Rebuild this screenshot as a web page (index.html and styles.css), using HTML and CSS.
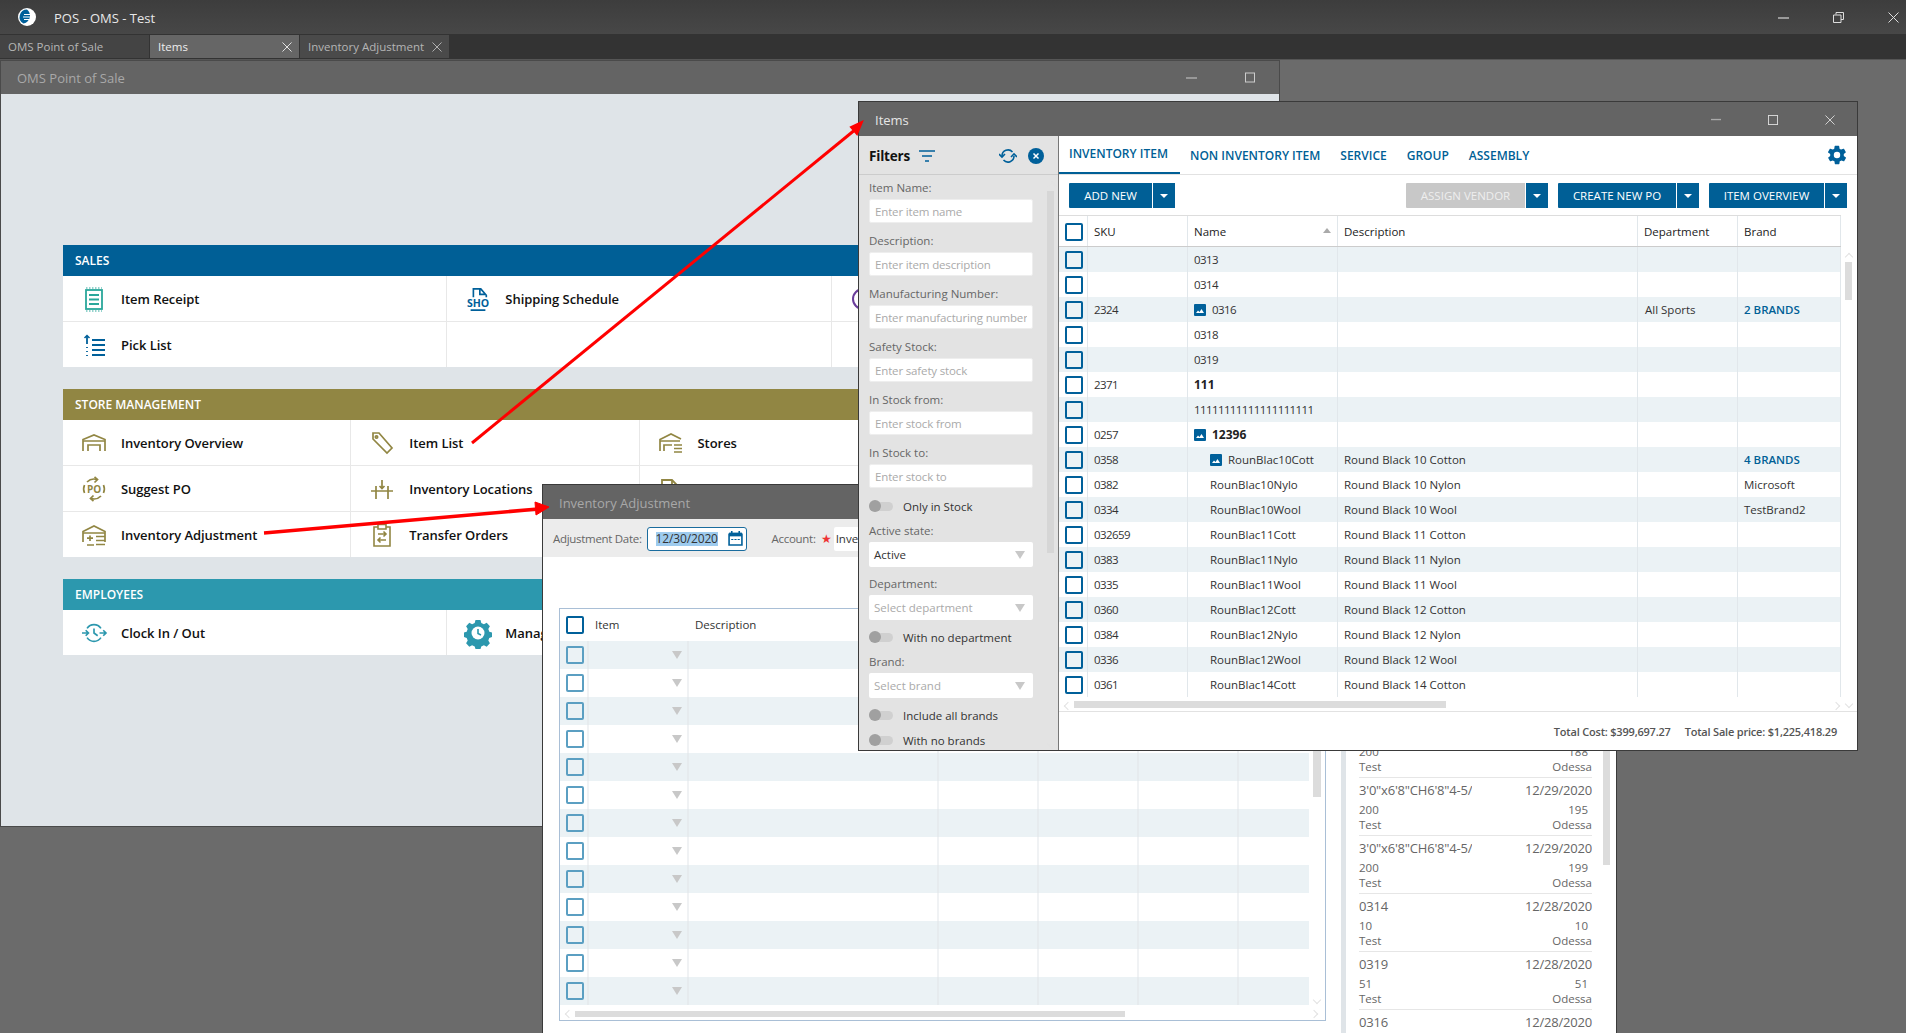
FILE: index.html
```html
<!DOCTYPE html>
<html lang="en">
<head>
<meta charset="utf-8">
<title>POS - OMS - Test</title>
<link rel="stylesheet" href="styles.css">
</head>
<body>
<header class="appbar">
  <svg class="logo" viewBox="0 0 18 18"><circle cx="9" cy="9" r="9" fill="#fff"/><path d="M9 1.500A7.500 7.500 0 0 0 5.500 15.600 9 9 0 0 0 12 9 9 9 0 0 0 9 1.500Z" fill="#00609a"/><path d="M6 6.500h6M5 9h8M6 11.500h5" stroke="#fff" stroke-width="1"/></svg>
  <span class="apptitle">POS - OMS - Test</span>
  <div class="ctrls ctrls-app">
    <svg viewBox="0 0 11 11"><path d="M0 6h11" stroke="#999" stroke-width="2"/></svg>
    <svg viewBox="0 0 11 11"><path d="M3 2.500V.5h7.500v7H8M.5 3h7.500v7.500H.5Z" fill="none" stroke="#ddd"/></svg>
    <svg viewBox="0 0 11 11"><path d="M.5.500l10 10M10.500.500l-10 10" stroke="#ddd" stroke-width="1"/></svg>
  </div>
</header>
<nav class="tabstrip">
  <div class="tab tab-a"><span>OMS Point of Sale</span></div>
  <div class="tab tab-b"><span>Items</span><svg viewBox="0 0 11 11"><path d="M.5.500l10 10M10.500.500l-10 10" stroke="#eee"/></svg></div>
  <div class="tab tab-c"><span>Inventory Adjustment</span><svg viewBox="0 0 11 11"><path d="M.5.500l10 10M10.500.500l-10 10" stroke="#bbb"/></svg></div>
</nav>

<main class="desktop">
  <section class="window win-oms">
    <div class="wintitle">
      <span class="dim">OMS Point of Sale</span>
      <div class="ctrls ctrls-oms">
        <svg viewBox="0 0 11 11"><path d="M0 6h11" stroke="#aaa" stroke-width="1.500"/></svg>
        <svg viewBox="0 0 11 11"><rect x=".5" y="1" width="9" height="9" fill="none" stroke="#ccc"/></svg>
      </div>
    </div>
    <div class="oms-body">
      <div class="group">
        <h2 class="ghead ghead-blue">SALES</h2>
        <div class="gcells cols3">
          <div class="cell">
            <svg class="ic" viewBox="0 0 24 24" fill="none" stroke="#2aa79b" stroke-width="1.800"><rect x="4" y="3" width="16" height="19" fill="#fff"/><path d="M7 8h10M7 12.500h10M7 17h10"/><path d="M4 1h16M4 24h16" stroke-dasharray="1.500 1.500" stroke-width="1"/></svg>
            <span>Item Receipt</span>
          </div>
          <div class="cell">
            <svg class="ic" viewBox="0 0 24 26" fill="none" stroke="#00609a" stroke-width="1.800"><path d="M7 11V2h8l6 7v2M14 3v5h6M4 25h16"/><text x="0" y="22" class="ic-sho" textLength="24" lengthAdjust="spacingAndGlyphs">SHO</text></svg>
            <span>Shipping Schedule</span>
          </div>
          <div class="cell">
            <svg class="ic" viewBox="0 0 24 24" fill="none" stroke="#6a3d9a" stroke-width="2"><circle cx="12" cy="12" r="10"/></svg>
          </div>
          <div class="cell">
            <svg class="ic" viewBox="0 0 24 24" fill="none" stroke="#00609a" stroke-width="1.800"><path d="M10 7h13M10 12h13M10 17h13M10 22h13"/><path d="M5 23v-1M5 19v-1M5 15v-1M5 11V3"/><path d="M2.500 5 5 2.500 7.500 5" stroke-width="1.500"/></svg>
            <span>Pick List</span>
          </div>
          <div class="cell"></div>
          <div class="cell"></div>
        </div>
      </div>

      <div class="group">
        <h2 class="ghead ghead-olive">STORE MANAGEMENT</h2>
        <div class="gcells cols4">
          <div class="cell">
            <svg class="ic" viewBox="0 0 24 24" fill="none" stroke="#918643" stroke-width="1.700"><path d="M1 20V8.500L12 4l11 4.500V20M1 10h22M6 20v-6h12v6"/></svg>
            <span>Inventory Overview</span>
          </div>
          <div class="cell">
            <svg class="ic" viewBox="0 0 24 24" fill="none" stroke="#918643" stroke-width="1.700"><path d="M3 2h6l13 15-5 5L3 8Z"/><circle cx="6.500" cy="6" r="1.200"/></svg>
            <span>Item List</span>
          </div>
          <div class="cell">
            <svg class="ic" viewBox="0 0 24 24" fill="none" stroke="#918643" stroke-width="1.700"><path d="M1 20V8.500L12 3l10 5M1 10h20M5 20v-6h8M15 14h8M15 17.500h8M15 21h8"/></svg>
            <span>Stores</span>
          </div>
          <div class="cell"></div>
          <div class="cell">
            <svg class="ic" viewBox="0 0 24 24" fill="none" stroke="#918643" stroke-width="1.700"><path d="M5 5A10 10 0 0 1 15 2.500M19 19A10 10 0 0 1 9 21.500M2.500 16A10 10 0 0 1 2.500 8M21.500 8A10 10 0 0 1 21.500 16"/><path d="M12.500 0l3 2.500-3 3M11.500 18.500l-3 3 3 2.500"/><text x="12" y="15.500" class="ic-po">PO</text></svg>
            <span>Suggest PO</span>
          </div>
          <div class="cell">
            <svg class="ic" viewBox="0 0 24 24" fill="none" stroke="#918643" stroke-width="1.700"><path d="M1 14h22M6 9v13M18 9v13M12 3v8M9.500 9l2.500 2.500L14.500 9"/></svg>
            <span>Inventory Locations</span>
          </div>
          <div class="cell">
            <svg class="ic" viewBox="0 0 24 24" fill="none" stroke="#918643" stroke-width="1.800"><path d="M3 21V3h10l6 6v12"/><path d="M13 3v6h6"/></svg>
          </div>
          <div class="cell"></div>
          <div class="cell">
            <svg class="ic" viewBox="0 0 24 24" fill="none" stroke="#918643" stroke-width="1.700"><path d="M1 19V8.500L12 3l11 5.500V19M1 10h22M8 12.500v5.500M5 15.200h6M5 22h7M14 13.500h9M14 17.500h9M14 21.500h9"/></svg>
            <span>Inventory Adjustment</span>
          </div>
          <div class="cell">
            <svg class="ic" viewBox="0 0 24 24" fill="none" stroke="#918643" stroke-width="1.600"><path d="M8 4H4v19h16V4h-4M8 1.500h8V6H8ZM8 11h8M13.500 8.500 16 11l-2.500 2.500M16 17H8M10.500 14.500 8 17l2.500 2.500"/></svg>
            <span>Transfer Orders</span>
          </div>
          <div class="cell"></div>
          <div class="cell"></div>
        </div>
      </div>

      <div class="group">
        <h2 class="ghead ghead-teal">EMPLOYEES</h2>
        <div class="gcells cols3">
          <div class="cell">
            <svg class="ic" viewBox="0 0 26 24" fill="none" stroke="#2c98ae" stroke-width="1.800"><path d="M5.500 7A9 9 0 0 1 20.500 7M20.500 17A9 9 0 0 1 5.500 17"/><path d="M13 7v5l4 3M0 12h7M4 9l3 3-3 3M19 12h7M23 9l3 3-3 3"/></svg>
            <span>Clock In / Out</span>
          </div>
          <div class="cell">
            <svg class="ic" viewBox="0 0 24 24"><path fill="#2c98ae" d="M9.500 0h5l.8 3 2.600 1.100 2.800-1.500 3.200 3.500-1.600 2.600 1 2.500 2.700.8v4.400l-2.700.8-1 2.500 1.600 2.600-3.200 3.500-2.800-1.500-2.600 1.100-.8 2.600h-5l-.8-2.600-2.600-1.100-2.800 1.500-3.200-3.500 1.600-2.600-1-2.500-2.700-.8v-4.400l2.700-.8 1-2.500-1.600-2.600 3.200-3.500 2.800 1.500L8.700 3Z" transform="translate(0 -1) scale(1 1.040)"/><circle cx="12" cy="12" r="6.500" fill="#fff"/><path d="M12 8v4.500l3 1.500" fill="none" stroke="#2c98ae" stroke-width="1.600"/></svg>
            <span>Manage Employees</span>
          </div>
          <div class="cell"></div>
        </div>
      </div>
    </div>
  </section>

  <section class="window win-inv">
    <div class="wintitle"><span class="dim">Inventory Adjustment</span></div>
    <div class="inv-toolbar">
      <label class="inv-label">Adjustment Date:</label>
      <div class="datebox">
        <span class="selected">12/30/2020</span>
        <svg class="cal" viewBox="0 0 14 14"><path d="M1 3h12v10H1Z" fill="#fff" stroke="#00609a" stroke-width="1.500"/><path d="M1 1.500h12V5H1Z" fill="#00609a"/><path d="M3.500 0v2M10.500 0v2" stroke="#00609a" stroke-width="1.500"/><path d="M3 8h2M6 8h2M9 8h2" stroke="#00609a"/></svg>
      </div>
      <label class="inv-label inv-acct">Account:</label>
      <span class="star">★</span>
      <div class="acctbox">Inventory</div>
    </div>
    <div class="inv-body">
      <div class="inv-left">
        <div class="inv-grid">
          <div class="ir ir-head">
            <div class="ic1"><i class="cb"></i></div><div class="ic2">Item</div><div class="ic3">Description</div><div></div><div></div><div></div><div></div>
          </div>
          <div class="ir alt"><div class="ic1"><i class="cb soft"></i></div><div class="ic2"><b class="tri"></b></div><div></div><div></div><div></div><div></div><div></div></div>
          <div class="ir"><div class="ic1"><i class="cb soft"></i></div><div class="ic2"><b class="tri"></b></div><div></div><div></div><div></div><div></div><div></div></div>
          <div class="ir alt"><div class="ic1"><i class="cb soft"></i></div><div class="ic2"><b class="tri"></b></div><div></div><div></div><div></div><div></div><div></div></div>
          <div class="ir"><div class="ic1"><i class="cb soft"></i></div><div class="ic2"><b class="tri"></b></div><div></div><div></div><div></div><div></div><div></div></div>
          <div class="ir alt"><div class="ic1"><i class="cb soft"></i></div><div class="ic2"><b class="tri"></b></div><div></div><div></div><div></div><div></div><div></div></div>
          <div class="ir"><div class="ic1"><i class="cb soft"></i></div><div class="ic2"><b class="tri"></b></div><div></div><div></div><div></div><div></div><div></div></div>
          <div class="ir alt"><div class="ic1"><i class="cb soft"></i></div><div class="ic2"><b class="tri"></b></div><div></div><div></div><div></div><div></div><div></div></div>
          <div class="ir"><div class="ic1"><i class="cb soft"></i></div><div class="ic2"><b class="tri"></b></div><div></div><div></div><div></div><div></div><div></div></div>
          <div class="ir alt"><div class="ic1"><i class="cb soft"></i></div><div class="ic2"><b class="tri"></b></div><div></div><div></div><div></div><div></div><div></div></div>
          <div class="ir"><div class="ic1"><i class="cb soft"></i></div><div class="ic2"><b class="tri"></b></div><div></div><div></div><div></div><div></div><div></div></div>
          <div class="ir alt"><div class="ic1"><i class="cb soft"></i></div><div class="ic2"><b class="tri"></b></div><div></div><div></div><div></div><div></div><div></div></div>
          <div class="ir"><div class="ic1"><i class="cb soft"></i></div><div class="ic2"><b class="tri"></b></div><div></div><div></div><div></div><div></div><div></div></div>
          <div class="ir alt"><div class="ic1"><i class="cb soft"></i></div><div class="ic2"><b class="tri"></b></div><div></div><div></div><div></div><div></div><div></div></div>
          <div class="sb sb-invv"></div>
          <div class="sb sb-invh"></div>
          <i class="chev chev-d chev-invd"></i>
          <i class="chev chev-l chev-invl"></i>
          <i class="chev chev-r chev-invr"></i>
        </div>
      </div>
      <aside class="inv-list">
        <div class="sb sb-list"></div>
        <article class="li"><div class="li1"><span class="nm">3'0"x6'8"CH6'8"4-5/</span><span>12/29/2020</span></div><div class="li2"><span>200</span><span class="qty">188</span></div><div class="li2"><span>Test</span><span>Odessa</span></div></article>
        <article class="li"><div class="li1"><span class="nm">3'0"x6'8"CH6'8"4-5/</span><span>12/29/2020</span></div><div class="li2"><span>200</span><span class="qty">195</span></div><div class="li2"><span>Test</span><span>Odessa</span></div></article>
        <article class="li"><div class="li1"><span class="nm">3'0"x6'8"CH6'8"4-5/</span><span>12/29/2020</span></div><div class="li2"><span>200</span><span class="qty">199</span></div><div class="li2"><span>Test</span><span>Odessa</span></div></article>
        <article class="li"><div class="li1"><span class="nm">0314</span><span>12/28/2020</span></div><div class="li2"><span>10</span><span class="qty">10</span></div><div class="li2"><span>Test</span><span>Odessa</span></div></article>
        <article class="li"><div class="li1"><span class="nm">0319</span><span>12/28/2020</span></div><div class="li2"><span>51</span><span class="qty">51</span></div><div class="li2"><span>Test</span><span>Odessa</span></div></article>
        <article class="li"><div class="li1"><span class="nm">0316</span><span>12/28/2020</span></div></article>
      </aside>
    </div>
  </section>

  <section class="window win-items">
    <div class="wintitle">
      <span class="bright">Items</span>
      <div class="ctrls ctrls-items">
        <svg viewBox="0 0 11 11"><path d="M0 5h11" stroke="#aaa" stroke-width="1.500"/></svg>
        <svg viewBox="0 0 11 11"><rect x=".5" y=".5" width="10" height="10" fill="none" stroke="#ddd"/></svg>
        <svg viewBox="0 0 11 11"><path d="M.5.500l10 10M10.500.500l-10 10" stroke="#ddd"/></svg>
      </div>
    </div>
    <div class="items-body">
      <aside class="filters">
        <div class="fhead">
          <strong>Filters</strong>
          <svg class="ficon" viewBox="0 0 16 12"><path d="M0 1h16M3 6h10M6 11h4" stroke="#00609a" stroke-width="1.500"/></svg>
          <svg class="frefresh" viewBox="0 0 18 14" fill="none" stroke="#00609a" stroke-width="1.600"><path d="M3 7a6 6 0 0 1 10.500-4M15 7a6 6 0 0 1-10.500 4"/><path d="M0 5l3 3 3-3"/><path d="M12 8l3-3 3 3"/></svg>
          <svg class="fclose" viewBox="0 0 16 16"><circle cx="8" cy="8" r="8" fill="#00609a"/><path d="M5.500 5.500l5 5M10.500 5.500l-5 5" stroke="#fff" stroke-width="1.500"/></svg>
        </div>
        <div class="fbody">
          <div class="sb sb-filt"></div>
          <i class="chev chev-u chev-filtu"></i>
          <i class="chev chev-d chev-filtd"></i>
          <div class="fld"><label>Item Name:</label><input placeholder="Enter item name"></div>
          <div class="fld"><label>Description:</label><input placeholder="Enter item description"></div>
          <div class="fld"><label>Manufacturing Number:</label><input placeholder="Enter manufacturing number"></div>
          <div class="fld"><label>Safety Stock:</label><input placeholder="Enter safety stock"></div>
          <div class="fld"><label>In Stock from:</label><input placeholder="Enter stock from"></div>
          <div class="fld"><label>In Stock to:</label><input placeholder="Enter stock to"></div>
          <div class="tog"><i class="track"></i><span>Only in Stock</span></div>
          <div class="fld fld-sel"><label>Active state:</label><div class="sel"><span class="val">Active</span><b class="tri"></b></div></div>
          <div class="fld fld-sel"><label>Department:</label><div class="sel"><span>Select department</span><b class="tri"></b></div></div>
          <div class="tog"><i class="track"></i><span>With no department</span></div>
          <div class="fld fld-sel"><label>Brand:</label><div class="sel"><span>Select brand</span><b class="tri"></b></div></div>
          <div class="tog"><i class="track"></i><span>Include all brands</span></div>
          <div class="tog"><i class="track"></i><span>With no brands</span></div>
        </div>
      </aside>
      <div class="content">
        <div class="ctabs">
          <a class="ctab on">INVENTORY ITEM</a>
          <a class="ctab">NON INVENTORY ITEM</a>
          <a class="ctab">SERVICE</a>
          <a class="ctab">GROUP</a>
          <a class="ctab">ASSEMBLY</a>
          <svg class="gear" viewBox="0 0 24 24"><path fill="#00609a" fill-rule="evenodd" d="M19.400 13a7.600 7.600 0 0 0 0-2l2.100-1.600a.5.500 0 0 0 .1-.6l-2-3.500a.5.500 0 0 0-.6-.2l-2.500 1a7.300 7.300 0 0 0-1.700-1l-.4-2.700a.5.500 0 0 0-.5-.4h-4a.5.500 0 0 0-.5.400l-.4 2.700a7.300 7.300 0 0 0-1.700 1l-2.500-1a.5.500 0 0 0-.6.200l-2 3.500a.5.500 0 0 0 .1.600L4.600 11a7.600 7.600 0 0 0 0 2l-2.100 1.600a.5.500 0 0 0-.1.600l2 3.500a.5.500 0 0 0 .6.200l2.500-1a7.300 7.300 0 0 0 1.700 1l.4 2.700a.5.500 0 0 0 .5.400h4a.5.500 0 0 0 .5-.4l.4-2.700a7.300 7.300 0 0 0 1.700-1l2.500 1a.5.500 0 0 0 .6-.2l2-3.500a.5.500 0 0 0-.1-.6ZM12 15.500a3.500 3.500 0 1 1 0-7 3.500 3.500 0 0 1 0 7Z"/></svg>
        </div>
        <div class="ctools">
          <div class="btn b-add">ADD NEW</div><div class="btn-d"><b></b></div>
          <div class="spacer"></div>
          <div class="btn b-off b-assign">ASSIGN VENDOR</div><div class="btn-d"><b></b></div>
          <div class="btn b-po">CREATE NEW PO</div><div class="btn-d"><b></b></div>
          <div class="btn b-ov">ITEM OVERVIEW</div><div class="btn-d"><b></b></div>
        </div>
        <div class="grid">
          <div class="gr ghd"><div class="c1"><i class="cb"></i></div><div>SKU</div><div class="namehd">Name<b class="sort"></b></div><div>Description</div><div>Department</div><div>Brand</div></div>
          <div class="gbody">
            <div class="gr alt"><div class="c1"><i class="cb"></i></div><div></div><div class="num">0313</div><div></div><div></div><div></div></div>
            <div class="gr"><div class="c1"><i class="cb"></i></div><div></div><div class="num">0314</div><div></div><div></div><div></div></div>
            <div class="gr alt"><div class="c1"><i class="cb"></i></div><div>2324</div><div class="num"><svg class="pic" viewBox="0 0 12 12"><rect width="12" height="12" rx="1" fill="#00609a"/><path d="M2 9l2-2.500 1.500 1.500L7.500 5 10 9Z" fill="#fff"/></svg>0316</div><div></div><div class="dep">All Sports</div><div class="lnk">2 BRANDS</div></div>
            <div class="gr"><div class="c1"><i class="cb"></i></div><div></div><div class="num">0318</div><div></div><div></div><div></div></div>
            <div class="gr alt"><div class="c1"><i class="cb"></i></div><div></div><div class="num">0319</div><div></div><div></div><div></div></div>
            <div class="gr"><div class="c1"><i class="cb"></i></div><div>2371</div><div class="bold">111</div><div></div><div></div><div></div></div>
            <div class="gr alt"><div class="c1"><i class="cb"></i></div><div></div><div class="num">11111111111111111111</div><div></div><div></div><div></div></div>
            <div class="gr"><div class="c1"><i class="cb"></i></div><div>0257</div><div class="bold"><svg class="pic" viewBox="0 0 12 12"><rect width="12" height="12" rx="1" fill="#00609a"/><path d="M2 9l2-2.500 1.500 1.500L7.500 5 10 9Z" fill="#fff"/></svg>12396</div><div></div><div></div><div></div></div>
            <div class="gr alt"><div class="c1"><i class="cb"></i></div><div>0358</div><div class="ind"><svg class="pic" viewBox="0 0 12 12"><rect width="12" height="12" rx="1" fill="#00609a"/><path d="M2 9l2-2.500 1.500 1.500L7.500 5 10 9Z" fill="#fff"/></svg>RounBlac10Cott</div><div>Round Black 10 Cotton</div><div></div><div class="lnk">4 BRANDS</div></div>
            <div class="gr"><div class="c1"><i class="cb"></i></div><div>0382</div><div class="ind">RounBlac10Nylo</div><div>Round Black 10 Nylon</div><div></div><div>Microsoft</div></div>
            <div class="gr alt"><div class="c1"><i class="cb"></i></div><div>0334</div><div class="ind">RounBlac10Wool</div><div>Round Black 10 Wool</div><div></div><div>TestBrand2</div></div>
            <div class="gr"><div class="c1"><i class="cb"></i></div><div>032659</div><div class="ind">RounBlac11Cott</div><div>Round Black 11 Cotton</div><div></div><div></div></div>
            <div class="gr alt"><div class="c1"><i class="cb"></i></div><div>0383</div><div class="ind">RounBlac11Nylo</div><div>Round Black 11 Nylon</div><div></div><div></div></div>
            <div class="gr"><div class="c1"><i class="cb"></i></div><div>0335</div><div class="ind">RounBlac11Wool</div><div>Round Black 11 Wool</div><div></div><div></div></div>
            <div class="gr alt"><div class="c1"><i class="cb"></i></div><div>0360</div><div class="ind">RounBlac12Cott</div><div>Round Black 12 Cotton</div><div></div><div></div></div>
            <div class="gr"><div class="c1"><i class="cb"></i></div><div>0384</div><div class="ind">RounBlac12Nylo</div><div>Round Black 12 Nylon</div><div></div><div></div></div>
            <div class="gr alt"><div class="c1"><i class="cb"></i></div><div>0336</div><div class="ind">RounBlac12Wool</div><div>Round Black 12 Wool</div><div></div><div></div></div>
            <div class="gr"><div class="c1"><i class="cb"></i></div><div>0361</div><div class="ind">RounBlac14Cott</div><div>Round Black 14 Cotton</div><div></div><div></div></div>
          </div>
          <div class="sb sb-gv"></div>
          <i class="chev chev-u chev-gu"></i>
          <i class="chev chev-d chev-gd"></i>
          <i class="chev chev-l chev-gl"></i>
          <i class="chev chev-r chev-gr"></i>
          <div class="hscroll"><div class="sb-gh"></div></div>
        </div>
        <footer class="totals"><span>Total Cost: $399,697.27</span><span>Total Sale price: $1,225,418.29</span></footer>
      </div>
    </div>
  </section>
</main>

<svg class="arrows" viewBox="0 0 1906 1033">
  <path d="M472 443 856 129" stroke="#f00" stroke-width="3" fill="none"/>
  <path d="M862 122 851 127 857 134Z" fill="#f00" stroke="#f00" stroke-width="2"/>
  <path d="M264 533 538 509" stroke="#f00" stroke-width="3.500" fill="none"/>
  <path d="M549 507 535 502 536 515Z" fill="#f00" stroke="#f00" stroke-width="1"/>
</svg>
</body>
</html>
```
FILE: styles.css
```css
* { box-sizing: border-box; }
html, body { margin: 0; height: 100%; }
body {
  width: 1906px; height: 1033px; overflow: hidden; position: relative;
  display: flex; flex-direction: column;
  background: #6b6b6b; color: #333;
  font: 11.5px/14px "Open Sans", "Liberation Sans", sans-serif;
}

.appbar { height: 34px; flex: none; display: flex; align-items: center; background: linear-gradient(#3d3d3d, #474747); padding-left: 18px; }
.logo { width: 18px; height: 18px; }
.apptitle { margin-left: 18px; padding-top: 1px; color: #e8e8e8; font-size: 13px; }
.ctrls { margin-left: auto; display: flex; align-items: center; }
.ctrls svg { width: 11px; height: 11px; display: block; }
.ctrls-app { gap: 44px; padding-right: 7px; }
.ctrls-oms { gap: 48px; padding-right: 23px; }
.ctrls-items { gap: 47px; padding-right: 22px; }
.ctrls-items svg { width: 10px; height: 10px; }

.tabstrip { height: 26px; flex: none; display: flex; gap: 1px; background: #333; padding: 1px 0 1px; border-bottom: 1px solid #555; }
.tab { width: 149px; display: flex; align-items: center; justify-content: space-between; padding: 1px 7px 0 8px; color: #b5b5b5; font-size: 11.500px; background: #444; }
.tab svg { width: 10px; height: 10px; flex: none; }
.tab-b { background: #666; color: #eee; }
.tab-c { background: #4a4a4a; }

.desktop { position: relative; flex: 1; }
.window { position: absolute; display: flex; flex-direction: column; border: 1px solid #3a3a3a; overflow: hidden; background: #fff; }
.win-oms { left: 0; top: 0; width: 1280px; height: 767px; background: #dfe4e8; border-color: #4a4a4a; }
.win-inv { left: 542px; top: 424px; width: 1075px; height: 620px; }
.win-items { left: 858px; top: 41px; width: 1000px; height: 650px; }
.wintitle { height: 34px; flex: none; display: flex; align-items: center; padding: 1px 0 0 16px; background: #646464; font-size: 13px; }
.win-oms .wintitle { height: 33px; padding-top: 0; }
.dim { color: #a8a8a8; }
.bright { color: #e6e6e6; }

/* launcher */
.oms-body { padding: 151px 64px 0 62px; display: flex; flex-direction: column; gap: 22px; }
.ghead { margin: 0; height: 31px; display: flex; align-items: center; padding-left: 12px; color: #fff; font-size: 12px; font-weight: 600; letter-spacing: 0; }
.ghead-blue { background: #005f96; }
.ghead-olive { background: #918643; }
.ghead-teal { background: #2c98ae; }
.gcells { display: grid; gap: 1px; background: #e8e8e8; grid-auto-rows: 45px; }
.cols3 { grid-template-columns: repeat(3, 1fr); }
.cols4 { grid-template-columns: repeat(4, 1fr); }
.cell { background: #fff; display: flex; align-items: center; gap: 15px; padding: 1px 0 0 19px; color: #111; font-size: 13px; font-weight: 600; letter-spacing: -.05px; white-space: nowrap; }
.ic { width: 24px; height: 24px; flex: none; overflow: visible; }
.ic-sho { font: 700 11px "Open Sans", sans-serif; fill: #00609a; stroke: none; }
.ic-po { font: 700 10px "Open Sans", sans-serif; fill: #918643; stroke: none; text-anchor: middle; }

/* inventory adjustment */
.inv-toolbar { height: 38px; flex: none; display: flex; align-items: center; background: #ececec; padding: 1px 0 0 10px; color: #666; }
.inv-label { white-space: nowrap; letter-spacing: -.3px; }
.datebox { width: 100px; height: 24px; margin-left: 5px; display: flex; align-items: center; justify-content: space-between; padding: 0 3px 0 8px; background: #fff; border: 1px solid #1a6c9e; border-radius: 3px; color: #333; font-size: 12px; letter-spacing: -.15px; }
.selected { background: #9ecbee; }
.cal { width: 15px; height: 15px; }
.inv-acct { margin-left: 25px; }
.star { flex: none; width: 10px; color: #e33; margin-left: 5px; font-size: 12px; }
.acctbox { width: 120px; height: 24px; margin-left: 3px; background: #fff; display: flex; align-items: center; padding-left: 2px; color: #333; border-radius: 2px; }
.inv-body { flex: 1; display: flex; min-height: 0; }
.inv-left { width: 798px; flex: none; padding: 51px 0 0 16px; }
.inv-grid { position: relative; width: 767px; height: 413px; border: 1px solid #a9bfd6; }
.ir { display: grid; grid-template-columns: 29px 100px 250px 100px 100px 100px 70px; width: 749px; height: 28px; }
.ir > div { border-right: 2px solid #f0f2f4; display: flex; align-items: center; }
.ir.alt > div { border-right-color: #e6ebee; }
.ir > div:last-child { border-right: 0; }
.ir.alt { background: #ebf2f5; }
.ir-head { height: 32px; color: #333; }
.ir-head > div { border-right: 0; }
.ir .ic1 { padding-left: 6px; }
.ic2 { justify-content: flex-end; padding-right: 5px; }
.ir-head .ic2 { justify-content: flex-start; padding-left: 6px; }
.ir-head .ic3 { padding-left: 6px; }
.cb { display: block; width: 18px; height: 18px; border: 2px solid #00609a; border-radius: 2px; flex: none; }
.cb.soft { border-color: #5b9fc2; }
.tri { display: block; width: 0; height: 0; border-left: 5px solid transparent; border-right: 5px solid transparent; border-top: 8px solid #c8c8c8; }

.sb { position: absolute; background: #dcdcdc; }
.sb-invv { left: 753px; top: 30px; width: 8px; height: 158px; }
.sb-invh { left: 15px; top: 402px; width: 550px; height: 6px; }
.chev { position: absolute; width: 6px; height: 6px; border: solid #e2e2e2; border-width: 1px 0 0 1px; }
.chev-u { transform: rotate(45deg); }
.chev-d { transform: rotate(225deg); }
.chev-l { transform: rotate(-45deg); }
.chev-r { transform: rotate(135deg); }
.chev-invd { left: 754px; top: 388px; }
.chev-invl { left: 6px; top: 402px; }
.chev-invr { left: 751px; top: 402px; }
.chev-filtu { left: 190px; top: 8px; }
.chev-filtd { left: 190px; top: 566px; }
.chev-gu { left: 787px; top: 39px; }
.chev-gd { left: 787px; top: 486px; }
.chev-gl { left: 6px; top: 488px; }
.chev-gr { left: 774px; top: 488px; }

.inv-list { position: relative; flex: 1; border-left: 5px solid #dfe4e8; padding: 163px 0 0 13px; color: #666; }
.sb-list { right: 6px; top: 100px; width: 7px; height: 208px; }
.li { width: 233px; height: 58px; border-bottom: 1px solid #e6e6e6; }
.li1 { display: flex; justify-content: space-between; height: 24px; align-items: center; font-size: 13px; letter-spacing: -.2px; }
.li1 .nm { width: 113px; overflow: hidden; white-space: nowrap; }
.li2 { display: flex; justify-content: space-between; height: 15px; }
.li1 + .li2 { margin-top: 1px; }
.qty { padding-right: 4px; }

/* items */
.items-body { flex: 1; display: flex; min-height: 0; }
.filters { width: 200px; flex: none; display: flex; flex-direction: column; background: #e3e3e3; border-right: 1px solid #777; }
.fhead { height: 39px; flex: none; display: flex; align-items: center; padding: 1px 0 0 10px; border-bottom: 1px solid #ccc; }
.fhead strong { color: #111; font-size: 13.500px; font-weight: 700; letter-spacing: -.2px; }
.ficon { width: 16px; height: 12px; margin-left: 9px; }
.frefresh { width: 18px; height: 14px; margin-left: 64px; }
.fclose { width: 16px; height: 16px; margin-left: 11px; }
.fbody { position: relative; flex: 1; padding: 6px 0 0 10px; overflow: hidden; color: #666; }
.sb-filt { left: 188px; top: 16px; width: 7px; height: 362px; background: #d6d6d6; }
.fld { width: 164px; margin-bottom: 11px; display: flex; flex-direction: column; gap: 4px; }
.fld label { line-height: 14px; white-space: nowrap; }
.fld input { width: 164px; height: 24px; border: 1px solid #eee; border-radius: 2px; background: #fff; padding: 0 5px; font: inherit; letter-spacing: -.15px; color: #333; outline: 0; }
.fld input::placeholder { color: #aaa; opacity: 1; }
.fld-sel { margin-bottom: 10px; }
.sel { height: 25px; background: #fff; border-radius: 2px; display: flex; align-items: center; justify-content: space-between; padding: 0 8px 0 5px; color: #aaa; }
.sel .val { color: #333; }
.tog { height: 15px; margin-bottom: 10px; display: flex; align-items: center; gap: 10px; color: #333; }
.track { position: relative; display: block; width: 24px; height: 9px; border-radius: 5px; background: #d0d0d0; }
.track::before { content: ""; position: absolute; left: 0; top: -2px; width: 12px; height: 12px; border-radius: 50%; background: #a0a0a0; }

.content { flex: 1; min-width: 0; display: flex; flex-direction: column; }
.ctabs { height: 39px; flex: none; display: flex; align-items: center; border-bottom: 1px solid #e2e2e2; color: #005f96; font-size: 12px; font-weight: 600; }
.ctab { padding: 2px 10px 0; white-space: nowrap; height: 100%; display: flex; align-items: center; }
.ctab.on { width: 121px; padding: 0 0 0 10px; border-bottom: 2px solid #005f96; }
.gear { width: 22px; height: 22px; margin-left: auto; margin-right: 9px; }
.ctools { height: 40px; flex: none; display: flex; align-items: center; padding: 1px 10px 0 10px; gap: 1px; }
.btn { height: 25px; display: flex; align-items: center; justify-content: center; background: #005f96; color: #fff; border-radius: 1px 0 0 1px; white-space: nowrap; }
.btn-d { width: 22px; height: 25px; background: #005f96; display: flex; align-items: center; justify-content: center; }
.btn-d b { display: block; border-left: 4px solid transparent; border-right: 4px solid transparent; border-top: 4px solid #fff; }
.spacer { flex: 1; }
.b-add { width: 83px; }
.b-assign { width: 119px; background: #c8c8c8; color: #eee; }
.b-po { width: 118px; margin-left: 9px; }
.b-ov { width: 115px; margin-left: 9px; }

.grid { position: relative; flex: 1; min-height: 0; display: flex; flex-direction: column; }
.gr { display: grid; grid-template-columns: 29px 100px 150px 300px 100px 103px; width: 782px; height: 25px; }
.gr > div { border-right: 1px solid #e1e7eb; display: flex; align-items: center; padding-left: 6px; white-space: nowrap; overflow: hidden; }
.gr > div:nth-child(2), .gr .num { letter-spacing: -.6px; }
.gr .c1 { padding-left: 6px; }
.gr .cb { width: 18px; height: 18px; }
.gr.alt { background: #ebf2f5; }
.ghd { height: 32px; flex: none; background: #fff; border-top: 1px solid #ddd; border-bottom: 1px solid #ccc; color: #222; }
.ghd > div { padding-top: 1px; }
.ghd > div:nth-child(2) { letter-spacing: 0; }
.gbody { height: 450px; flex: none; overflow: hidden; }
.namehd { position: relative; }
.sort { position: absolute; right: 6px; top: 12px; border-left: 4px solid transparent; border-right: 4px solid transparent; border-bottom: 5px solid #aaa; }
.pic { width: 12px; height: 12px; margin-right: 6px; flex: none; }
.gr .bold { font-weight: 700; font-size: 12px; color: #222; }
.gr .ind { padding-left: 22px; }
.gr .dep { padding-left: 7px; }
.gr .lnk { color: #005f96; font-weight: 600; }
.sb-gv { left: 786px; top: 47px; width: 7px; height: 38px; }
.hscroll { height: 15px; flex: none; padding: 4px 0 0 15px; border-bottom: 1px solid #e2e2e2; }
.sb-gh { width: 372px; height: 7px; background: #dcdcdc; }
.totals { height: 38px; flex: none; display: flex; align-items: center; justify-content: flex-end; gap: 14px; padding: 1px 20px 0 0; color: #555; font-size: 11px; font-weight: 600; letter-spacing: -.2px; }

.arrows { position: absolute; left: 0; top: 0; width: 1906px; height: 1033px; pointer-events: none; }
```
